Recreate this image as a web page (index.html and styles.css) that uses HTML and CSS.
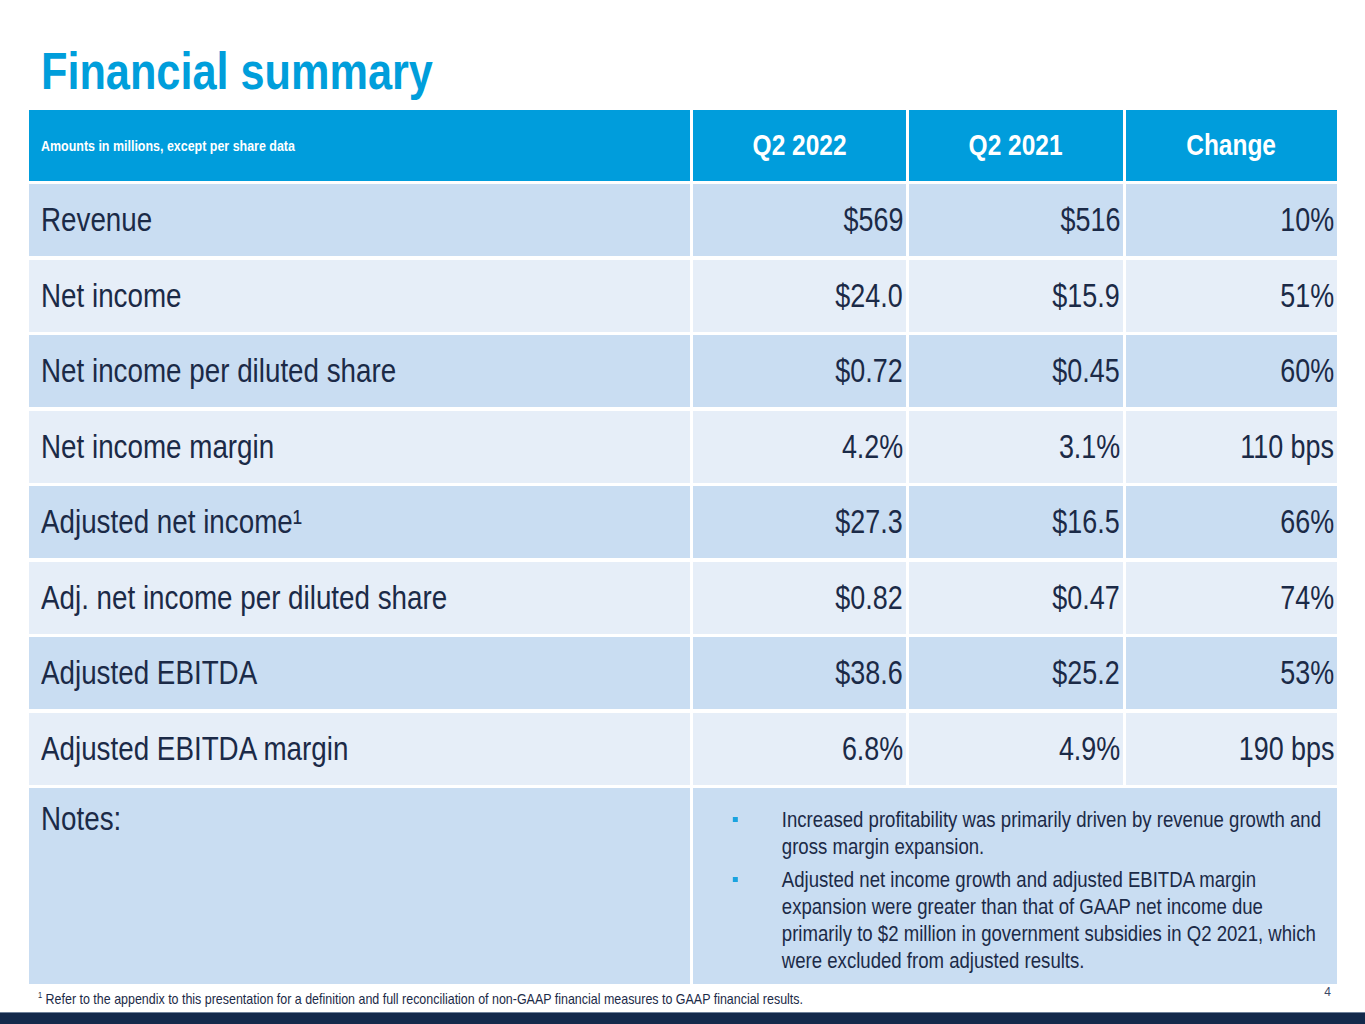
FILE: index.html
```html
<!DOCTYPE html>
<html lang="en">
<head>
<meta charset="utf-8">
<title>Financial summary</title>
<link rel="stylesheet" href="styles.css">
</head>
<body>
<div class="slide">
  <h1 class="title"><span class="t">Financial summary</span></h1>
  <div class="table">
    <div class="cell head head-label"><span class="t">Amounts in millions, except per share data</span></div>
    <div class="cell head head-col"><span class="t">Q2 2022</span></div>
    <div class="cell head head-col"><span class="t">Q2 2021</span></div>
    <div class="cell head head-col"><span class="t">Change</span></div>

    <div class="cell dark label"><span class="t">Revenue</span></div>
    <div class="cell dark num"><span class="t">$569</span></div>
    <div class="cell dark num"><span class="t">$516</span></div>
    <div class="cell dark num"><span class="t">10%</span></div>

    <div class="cell light label"><span class="t">Net income</span></div>
    <div class="cell light num"><span class="t">$24.0</span></div>
    <div class="cell light num"><span class="t">$15.9</span></div>
    <div class="cell light num"><span class="t">51%</span></div>

    <div class="cell dark label"><span class="t">Net income per diluted share</span></div>
    <div class="cell dark num"><span class="t">$0.72</span></div>
    <div class="cell dark num"><span class="t">$0.45</span></div>
    <div class="cell dark num"><span class="t">60%</span></div>

    <div class="cell light label"><span class="t">Net income margin</span></div>
    <div class="cell light num"><span class="t">4.2%</span></div>
    <div class="cell light num"><span class="t">3.1%</span></div>
    <div class="cell light num"><span class="t">110 bps</span></div>

    <div class="cell dark label"><span class="t">Adjusted net income¹</span></div>
    <div class="cell dark num"><span class="t">$27.3</span></div>
    <div class="cell dark num"><span class="t">$16.5</span></div>
    <div class="cell dark num"><span class="t">66%</span></div>

    <div class="cell light label"><span class="t">Adj. net income per diluted share</span></div>
    <div class="cell light num"><span class="t">$0.82</span></div>
    <div class="cell light num"><span class="t">$0.47</span></div>
    <div class="cell light num"><span class="t">74%</span></div>

    <div class="cell dark label"><span class="t">Adjusted EBITDA</span></div>
    <div class="cell dark num"><span class="t">$38.6</span></div>
    <div class="cell dark num"><span class="t">$25.2</span></div>
    <div class="cell dark num"><span class="t">53%</span></div>

    <div class="cell light label"><span class="t">Adjusted EBITDA margin</span></div>
    <div class="cell light num"><span class="t">6.8%</span></div>
    <div class="cell light num"><span class="t">4.9%</span></div>
    <div class="cell light num"><span class="t">190 bps</span></div>

    <div class="cell dark notes-label"><span class="t">Notes:</span></div>
    <div class="cell dark notes">
      <ul class="bullets">
        <li>Increased profitability was primarily driven by revenue growth and gross margin expansion.</li>
        <li>Adjusted net income growth and adjusted EBITDA margin expansion were greater than that of GAAP net income due primarily to $2 million in government subsidies in Q2 2021, which were excluded from adjusted results.</li>
      </ul>
    </div>
  </div>
  <div class="footer-row">
    <p class="footnote"><span class="t"><sup>1</sup> Refer to the appendix to this presentation for a definition and full reconciliation of non-GAAP financial measures to GAAP financial results.</span></p>
    <span class="page-num">4</span>
  </div>
  <div class="bar"></div>
</div>
</body>
</html>
```

FILE: styles.css
```css
* { box-sizing: border-box; }
html, body { margin: 0; padding: 0; background: #ffffff; }
body {
  font-family: "Liberation Sans", Arial, sans-serif;
  color: #1b2a47;
}
.slide {
  width: 1365px;
  height: 1024px;
  display: flex;
  flex-direction: column;
  overflow: hidden;
}
/* condensed rendering of Liberation Sans to mimic Arial Narrow */
.t {
  display: inline-block;
  white-space: nowrap;
  transform: scaleX(var(--k, 0.83));
  transform-origin: left center;
}
.title {
  margin: 0 0 9px 0;
  padding: 41px 0 0 41px;
  font-size: 52px;
  line-height: 60px;
  font-weight: 700;
  color: #009edb;
}
.title .t { --k: 0.832; }
.table {
  margin-left: 29px;
  display: grid;
  grid-template-columns: 661px 213px 214px 211px;
  grid-template-rows: 70.5px repeat(8, 72px) 196px;
  column-gap: 3px;
  row-gap: 3.5px;
}
.cell {
  display: flex;
  align-items: center;
}
.head { background: #009ddc; color: #ffffff; font-weight: 700; }
.head-label { font-size: 15px; padding-left: 12px; }
.head-col { justify-content: center; font-size: 29.5px; }
.head-col .t { transform-origin: center center; }
.dark { background: #c9ddf2; }
.light { background: #e6eef8; }
.label { font-size: 33px; padding-left: 12px; }
.label .t { --k: 0.842; }
.num { font-size: 33px; justify-content: flex-end; padding-right: 3px; }
.num .t { --k: 0.815; transform-origin: right center; }
.notes-label {
  font-size: 33px;
  padding: 12px 0 0 12px;
  align-items: flex-start;
  line-height: 38px;
}
.notes-label .t { --k: 0.842; }
.notes {
  grid-column: span 3;
  align-items: flex-start;
  padding: 18px 0 0 0;
}
.bullets {
  flex: 0 0 auto;
  margin: 0;
  padding: 0;
  list-style: none;
  font-size: 22.4px;
  line-height: 27px;
  width: 765px;
  transform: scaleX(0.83);
  transform-origin: left top;
}
.bullets li {
  position: relative;
  padding-left: 107px;
  margin-bottom: 6px;
}
.bullets li::before {
  content: "";
  position: absolute;
  left: 48px;
  top: 11px;
  width: 6px;
  height: 5px;
  background: #1aa3df;
}
.footer-row {
  display: flex;
  justify-content: space-between;
  align-items: flex-start;
  height: 28px;
  padding: 0 34px 0 38px;
}
.footnote {
  margin: 6px 0 0 0;
  font-size: 15px;
  line-height: 17px;
  color: #1b2a47;
}
.footnote sup {
  font-size: 9px;
  vertical-align: 6px;
  line-height: 0;
}
.page-num {
  font-size: 12px;
  line-height: 14px;
  color: #3a4a66;
  margin-top: 1px;
}
.bar {
  flex: 1;
  background: #13294b;
  border-top: 1px solid #6f819a;
}
```
